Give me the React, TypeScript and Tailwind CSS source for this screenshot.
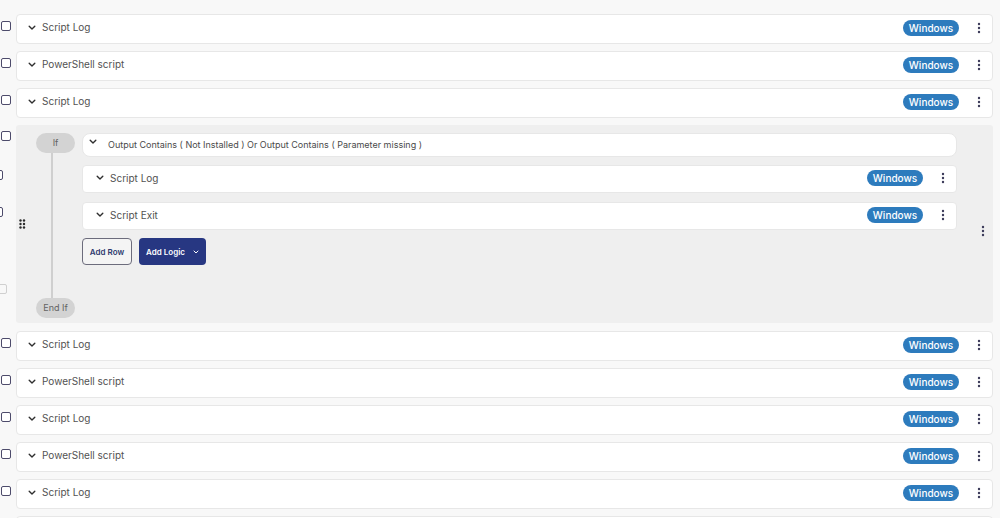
import React from "react";

const font = { fontFamily: "Inter, 'Noto Sans', sans-serif" };

function Checkbox({ className = "" }: { className?: string }) {
  return (
    <div
      className={`w-[10px] h-[10px] shrink-0 rounded-[2px] border-[1.5px] border-[#4d4b6b] bg-white ${className}`}
    />
  );
}

function Chevron({ className = "" }: { className?: string }) {
  return (
    <svg width="8" height="6" viewBox="0 0 8 6" className={className}>
      <path d="M1.2 1.3 L4 4 L6.8 1.3" fill="none" stroke="#2f2f2f" strokeWidth="1.4" strokeLinecap="round" strokeLinejoin="round" />
    </svg>
  );
}

function Kebab() {
  return (
    <svg width="4" height="12" viewBox="0 0 4 12">
      <circle cx="2" cy="2" r="1.2" fill="#3c3b5a" />
      <circle cx="2" cy="6" r="1.2" fill="#3c3b5a" />
      <circle cx="2" cy="10" r="1.2" fill="#3c3b5a" />
    </svg>
  );
}

function DragHandle() {
  return (
    <svg width="7" height="10" viewBox="0 0 7 10">
      {[1.5, 5].map((x) =>
        [1.5, 5, 8.5].map((y) => <circle key={`${x}-${y}`} cx={x} cy={y} r="1.2" fill="#2a2a2a" />),
      )}
    </svg>
  );
}

function Badge() {
  return (
    <span className="inline-flex items-center justify-center w-[56px] h-[16px] rounded-full bg-[#2d7bbd] text-white text-[10px] font-medium leading-none">
      Windows
    </span>
  );
}

function StepCard({ title, h = 30, inner = false }: { title: string; h?: number; inner?: boolean }) {
  return (
    <div
      className={`flex items-center bg-white border border-[#e7e7e7] rounded-[4px] ${inner ? "pl-[13px] pb-[2px]" : "pl-[11px] pb-[3px]"} pr-[11px]`}
      style={{ height: h }}
    >
      <Chevron className="mr-[6px]" />
      <span className="text-[10px] text-[#525252]">{title}</span>
      <div className="ml-auto flex items-center gap-[18px]">
        <Badge />
        <Kebab />
      </div>
    </div>
  );
}

function Row({ title }: { title: string }) {
  return (
    <div className="flex">
      <div className="w-[16px] shrink-0 pl-[1px] pt-[7px]">
        <Checkbox />
      </div>
      <div className="flex-1 mr-[7px]">
        <StepCard title={title} />
      </div>
    </div>
  );
}

function EmptyRow() {
  return (
    <div className="flex">
      <div className="w-[16px] shrink-0" />
      <div className="flex-1 mr-[7px] h-[30px] bg-white border border-[#e7e7e7] rounded-[4px]" />
    </div>
  );
}

function Pill({ label }: { label: string }) {
  return (
    <div className="w-[39px] h-[20px] rounded-full bg-[#d3d3d3] flex items-center justify-center text-[9px] text-[#636363]">
      {label}
    </div>
  );
}

function LogicBlock() {
  return (
    <div className="flex">
      <div className="w-[16px] shrink-0 flex flex-col pt-[6px]">
        <Checkbox className="ml-[1px]" />
        <Checkbox className="-ml-[7px] mt-[29px]" />
        <Checkbox className="-ml-[7px] mt-[27px]" />
        <div className="-ml-[3px] mt-[67px] w-[10px] h-[10px] rounded-[2px] border-[1.5px] border-[#d0d0d0]" />
      </div>
      <div className="flex-1 mr-[7px] h-[198px] bg-[#efefef] rounded-[3px] flex">
        <div className="w-[20px] shrink-0 flex items-center pl-[3px]">
          <DragHandle />
        </div>
        <div className="w-[39px] shrink-0 flex flex-col items-center pt-[8px] pb-[5px]">
          <Pill label="If" />
          <div className="flex-1 w-[2px] bg-[#cfcfcf] -ml-[7px]" />
          <Pill label="End If" />
        </div>
        <div className="flex-1 ml-[7px] pt-[8px] flex flex-col">
          <div className="h-[24px] bg-white border border-[#e7e7e7] rounded-[8px] flex items-center pl-[6px]">
            <Chevron className="mr-[11px] -mt-[6px]" />
            <span className="text-[9px] text-[#4a4a4a]">
              Output Contains ( Not Installed ) Or Output Contains ( Parameter missing )
            </span>
          </div>
          <div className="mt-[8px]">
            <StepCard title="Script Log" h={28} inner />
          </div>
          <div className="mt-[9px]">
            <StepCard title="Script Exit" h={28} inner />
          </div>
          <div className="mt-[8px] flex gap-[7px]">
            <button className="w-[50px] h-[27px] rounded-[4px] border border-[#6c6c7c] bg-[#f4f4f4] text-[8px] font-semibold text-[#2d3a6e]">
              Add Row
            </button>
            <button className="w-[67px] h-[27px] rounded-[4px] bg-[#273782] text-white text-[8px] font-semibold flex items-center justify-center gap-[8px]">
              Add Logic
              <svg width="6" height="4" viewBox="0 0 6 4">
                <path d="M1 1 L3 3 L5 1" fill="none" stroke="#ffffff" strokeWidth="1" strokeLinecap="round" />
              </svg>
            </button>
          </div>
        </div>
        <div className="w-[36px] shrink-0 flex items-center justify-end pr-[8px] pt-[14px]">
          <Kebab />
        </div>
      </div>
    </div>
  );
}

export default function App() {
  const before = ["Script Log", "PowerShell script", "Script Log"];
  const after = ["Script Log", "PowerShell script", "Script Log", "PowerShell script", "Script Log"];
  return (
    <div className="w-full h-[518px] overflow-hidden bg-[#f8f8f8] pt-[14px]" style={font}>
      <div className="flex flex-col gap-[7px]">
        {before.map((t, i) => (
          <Row key={`b${i}`} title={t} />
        ))}
        <LogicBlock />
        <div className="flex flex-col gap-[7px] mt-[1px]">
          {after.map((t, i) => (
            <Row key={`a${i}`} title={t} />
          ))}
          <EmptyRow />
        </div>
      </div>
    </div>
  );
}
